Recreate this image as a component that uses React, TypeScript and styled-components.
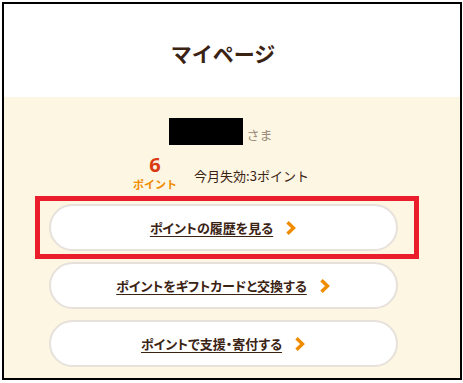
import React from 'react';
import styled, { createGlobalStyle } from 'styled-components';

const GlobalStyle = createGlobalStyle`
  html, body {
    margin: 0;
    padding: 0;
    background: #ffffff;
  }
  body {
    font-family: "Noto Sans CJK JP", "Noto Sans", sans-serif;
  }
`;

const COLOR = {
  BROWN: '#3b2314',
  CREAM: '#fdf6e3',
  ORANGE: '#f08c00',
  RED_ORANGE: '#d93a12',
  GRAY_BROWN: '#9b8a7a',
  LINE: '#e6e1db',
  MARK: '#ea1d2c',
};

const links = [
  { label: 'ポイントの履歴を見る', marked: true },
  { label: 'ポイントをギフトカードと交換する', marked: false },
  { label: 'ポイントで支援・寄付する', marked: false },
];

const Chevron = () => (
  <svg width="11" height="14" viewBox="0 0 11 14" fill="none">
    <path d="M2.5 1.2 L8.5 7 L2.5 12.8" stroke={COLOR.ORANGE} strokeWidth="3.4" />
  </svg>
);

const App = () => {
  return (
    <>
      <GlobalStyle />
      <Frame>
        <Header>
          <Title>マイページ</Title>
        </Header>
        <Body>
          <NameRow>
            <Redacted />
            <Honorific>さま</Honorific>
          </NameRow>
          <PointRow>
            <PointBox>
              <PointValue>6</PointValue>
              <PointUnit>ポイント</PointUnit>
            </PointBox>
            <Expire>今月失効:3ポイント</Expire>
          </PointRow>
          <LinkList>
            {links.map((item) => (
              <LinkItem key={item.label}>
                {item.marked && <Marker />}
                <LinkButton>
                  <LinkText>{item.label}</LinkText>
                  <Chevron />
                </LinkButton>
              </LinkItem>
            ))}
          </LinkList>
        </Body>
      </Frame>
    </>
  );
};

const Frame = styled.div`
  display: flex;
  flex-direction: column;
  box-sizing: border-box;
  width: 460px;
  height: 378px;
  margin: 2px 0 0 2px;
  border: 2px solid #000;
  overflow: hidden;
`;

const Header = styled.div`
  display: flex;
  justify-content: center;
  align-items: center;
  height: 93px;
  padding-right: 18px;
  background: #fff;
`;

const Title = styled.h1`
  margin: 4px 0 0;
  font-size: 21px;
  font-weight: 700;
  color: ${COLOR.BROWN};
`;

const Body = styled.div`
  flex: 1;
  display: flex;
  flex-direction: column;
  align-items: center;
  padding: 21px 18px 0 0;
  background: ${COLOR.CREAM};
`;

const NameRow = styled.div`
  display: flex;
  align-items: flex-end;
  margin-left: -4px;
`;

const Redacted = styled.div`
  width: 74px;
  height: 27px;
  background: #000;
`;

const Honorific = styled.span`
  margin-left: 3px;
  font-size: 13px;
  line-height: 20px;
  color: ${COLOR.GRAY_BROWN};
`;

const PointRow = styled.div`
  display: flex;
  align-items: center;
  gap: 17px;
  margin: 9px 0 0 -4px;
`;

const PointBox = styled.div`
  display: flex;
  flex-direction: column;
  align-items: center;
`;

const PointValue = styled.span`
  font-family: "Noto Sans", sans-serif;
  font-size: 20px;
  font-weight: 700;
  line-height: 22px;
  color: ${COLOR.RED_ORANGE};
`;

const PointUnit = styled.span`
  font-size: 11px;
  font-weight: 700;
  line-height: 16px;
  color: ${COLOR.ORANGE};
`;

const Expire = styled.span`
  font-size: 13px;
  color: ${COLOR.BROWN};
  margin-top: 4px;
`;

const LinkList = styled.div`
  display: flex;
  flex-direction: column;
  gap: 11px;
  margin-top: 12px;
`;

const LinkItem = styled.div`
  position: relative;
`;

const Marker = styled.div`
  position: absolute;
  top: -8px;
  bottom: -8px;
  left: -14px;
  right: -21px;
  border: 5px solid ${COLOR.MARK};
  pointer-events: none;
`;

const LinkButton = styled.a`
  display: flex;
  justify-content: center;
  align-items: center;
  gap: 12px;
  box-sizing: border-box;
  width: 349px;
  height: 47px;
  border: 2px solid ${COLOR.LINE};
  border-radius: 24px;
  background: #fff;
  cursor: pointer;
`;

const LinkText = styled.span`
  font-size: 13px;
  font-weight: 700;
  font-feature-settings: "palt" 1;
  color: ${COLOR.BROWN};
  text-decoration: underline;
  text-underline-offset: 3px;
`;

export default App;
